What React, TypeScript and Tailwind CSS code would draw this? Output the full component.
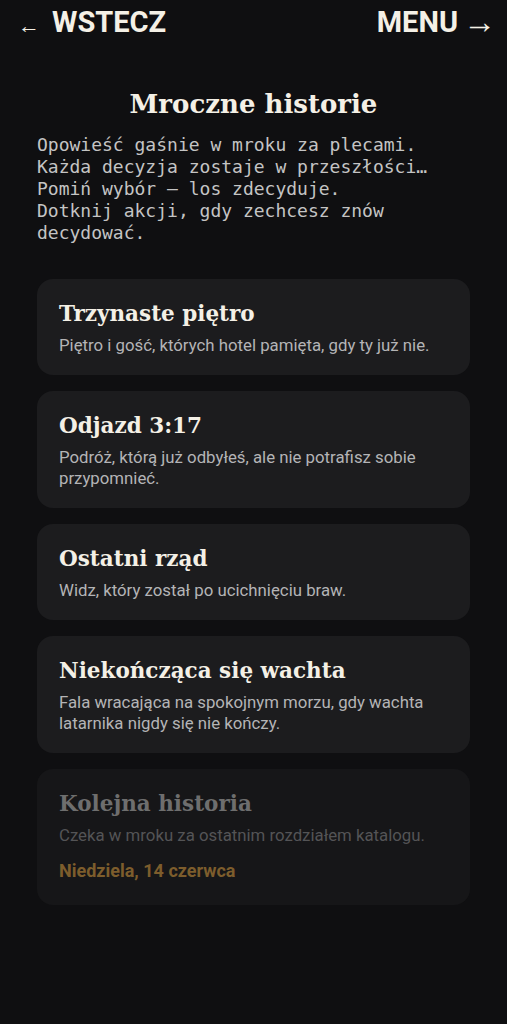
import React from "react"

type Story = {
  title: string
  desc: string
  locked?: boolean
  date?: string
}

const stories: Story[] = [
  { title: "Trzynaste piętro", desc: "Piętro i gość, których hotel pamięta, gdy ty już nie." },
  { title: "Odjazd 3:17", desc: "Podróż, którą już odbyłeś, ale nie potrafisz sobie przypomnieć." },
  { title: "Ostatni rząd", desc: "Widz, który został po ucichnięciu braw." },
  { title: "Niekończąca się wachta", desc: "Fala wracająca na spokojnym morzu, gdy wachta latarnika nigdy się nie kończy." },
  {
    title: "Kolejna historia",
    desc: "Czeka w mroku za ostatnim rozdziałem katalogu.",
    locked: true,
    date: "Niedziela, 14 czerwca",
  },
]

function StoryCard({ story }: { story: Story }) {
  const locked = !!story.locked
  return (
    <div
      className={
        locked
          ? "rounded-2xl bg-[#161618] px-[22px] pt-[20px] pb-[23px]"
          : "rounded-2xl bg-[#1c1c1e] px-[22px] pt-[20px] pb-[19px]"
      }
    >
      <h2
        className={
          "font-['DejaVu_Serif',serif] text-[21.5px] font-bold leading-[30px] " +
          (locked ? "text-[#6e6e6e]" : "text-[#f4f0e6]")
        }
      >
        {story.title}
      </h2>
      <p
        className={
          "mt-[6px] font-['Roboto',sans-serif] text-[16.8px] leading-[21px] " +
          (locked ? "text-[#545456]" : "text-[#b4b4b6]")
        }
      >
        {story.desc}
      </p>
      {story.date && (
        <p className="mt-[14px] font-['Roboto',sans-serif] text-[18px] font-bold leading-[22px] text-[#7d5d2c]">
          {story.date}
        </p>
      )}
    </div>
  )
}

export default function App() {
  return (
    <div className="min-h-screen bg-[#0f0f11] pb-10">
      <header className="flex items-center justify-between pl-[15px] pr-[11px] pt-[2px] font-['Roboto',sans-serif] text-[29px] font-bold leading-[40px] text-[#f4f0e6]">
        <span className="flex items-center gap-[12px] pl-[3px]">
          <span className="translate-y-[4px] text-[22px] font-normal">←</span>
          WSTECZ
        </span>
        <span className="flex items-center gap-[5px]">
          MENU
          <span className="text-[33px] font-normal">→</span>
        </span>
      </header>

      <main className="px-[37px]">
        <h1 className="mt-[44px] text-center font-['DejaVu_Serif',serif] text-[26px] font-bold leading-[36px] text-[#f4f0e6]">
          Mroczne historie
        </h1>
        <p className="mt-[12px] whitespace-pre-line font-['DejaVu_Sans_Mono',monospace] text-[18px] leading-[22px] text-[#c4c4c4]">
          {"Opowieść gaśnie w mroku za plecami.\nKażda decyzja zostaje w przeszłości…\nPomiń wybór — los zdecyduje.\nDotknij akcji, gdy zechcesz znów\ndecydować."}
        </p>

        <div className="mt-[35px] flex flex-col gap-[16px]">
          {stories.map((s) => (
            <StoryCard key={s.title} story={s} />
          ))}
        </div>
      </main>
    </div>
  )
}
